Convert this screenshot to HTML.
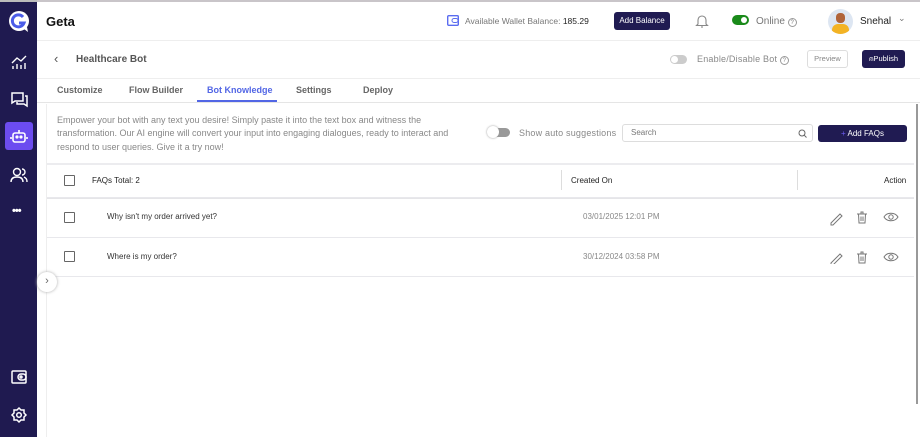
<!DOCTYPE html>
<html><head><meta charset="utf-8"><style>
*{box-sizing:border-box;margin:0;padding:0}
body{width:920px;height:437px;overflow:hidden;background:#fff;font-family:"Liberation Sans",sans-serif;position:relative;color:#333}
.abs{position:absolute}
.sb{left:0;top:0;width:37px;height:437px;background:#1f1a50;border-top:2px solid #bbb}
.ic{position:absolute;left:9px;width:20px;height:20px}
.top{left:37px;top:0;right:0;height:41px;border-top:2px solid #c9c5c9;border-bottom:1px solid #eee}
.t{position:absolute;white-space:nowrap}
.btn{position:absolute;background:#201b52;color:#fff;font-size:8px;border-radius:3px;text-align:center}
.row{position:absolute;left:47px;right:6px;border-bottom:1px solid #e8e8ec}
.cb{position:absolute;left:64px;width:11px;height:11px;border:1.3px solid #666;border-radius:1px}
</style></head><body>
<div class="abs sb">
 <svg class="ic" style="top:7px;left:7px;width:24px;height:24px" viewBox="0 0 24 24"><circle cx="12" cy="12" r="10" fill="#fff"/><path d="M16 8a6 6 0 1 0 1 6h-5" stroke="#4b5ce8" stroke-width="3" fill="none"/><path d="M17 20l4 3-1-5z" fill="#fff"/></svg>
 <svg class="ic" style="top:50px" viewBox="0 0 20 20" stroke="#fff" fill="none" stroke-width="1.4"><path d="M3 11l5-5 4 3 5-5"/><path d="M4 17v-3M8 17v-5M12 17v-4M16 17v-6"/></svg>
 <svg class="ic" style="top:87px" viewBox="0 0 20 20" stroke="#fff" fill="none" stroke-width="1.5"><path d="M3 4h11v8H6l-3 2z"/><path d="M16 7h2v10l-3-2H8v-2"/></svg>
 <div style="position:absolute;left:5px;top:120px;width:28px;height:28px;background:#6c4cf0;border-radius:3px"></div>
 <svg class="ic" style="top:124px" viewBox="0 0 20 20" stroke="#fff" fill="none" stroke-width="1.6"><rect x="4" y="7" width="12" height="9" rx="2"/><path d="M10 4v3M2 11v2M18 11v2"/><circle cx="8" cy="11" r=".8" fill="#fff"/><circle cx="12" cy="11" r=".8" fill="#fff"/></svg>
 <svg class="ic" style="top:163px" viewBox="0 0 20 20" stroke="#fff" fill="none" stroke-width="1.4"><circle cx="8" cy="7" r="3.5"/><path d="M2 17c0-4 3-5 6-5s6 1 6 5M13 4a3 3 0 0 1 0 6M15 12c2 1 3 2 3 5"/></svg>
 <div class="t" style="left:12px;top:203px;color:#fff;font-size:11px;font-weight:bold;letter-spacing:-1px">•••</div>
 <svg class="ic" style="top:365px" viewBox="0 0 20 20" stroke="#fff" fill="none" stroke-width="1.5"><rect x="3" y="4" width="14" height="12" rx="1"/><rect x="9" y="7" width="8" height="6" rx="3"/><circle cx="12" cy="10" r="1"/></svg>
 <svg class="ic" style="top:403px" viewBox="0 0 20 20" stroke="#fff" fill="none" stroke-width="1.5"><path d="M10 3l2 2h3v3l2 2-2 2v3h-3l-2 2-2-2H5v-3l-2-2 2-2V5h3z"/><circle cx="10" cy="10" r="2.3"/></svg>
</div>
<div class="abs top">
 <div class="t" style="left:9px;top:12px;font-size:13px;font-weight:bold;color:#111">Geta</div>
 <svg class="abs" style="left:410px;top:13px" width="12" height="11" viewBox="0 0 12 11"><rect x=".7" y=".7" width="10.6" height="9.6" rx="1" fill="none" stroke="#5a6cf0" stroke-width="1.4"/><rect x="5" y="3.5" width="6" height="4" rx="2" fill="none" stroke="#5a6cf0"/></svg>
 <div class="t" style="left:428px;top:14px;font-size:8.5px;color:#777">Available Wallet Balance: <span style="color:#222">185.29</span></div>
 <div class="btn" style="left:577px;top:10px;width:56px;height:18px;line-height:18px">Add Balance</div>
 <svg class="abs" style="left:658px;top:11px" width="14" height="16" viewBox="0 0 14 16" fill="none" stroke="#888" stroke-width="1.1"><path d="M3 11V7a4 4 0 0 1 8 0v4l1.5 1.5h-11z"/><path d="M6 14h2"/></svg>
 <div class="abs" style="left:695px;top:13px;width:17px;height:10px;border-radius:5px;background:#1a8a1a"><div style="position:absolute;right:2px;top:2px;width:6px;height:6px;border-radius:3px;background:#fff"></div></div>
 <div class="t" style="left:719px;top:14px;font-size:10px;color:#777">Online <span style="border:1px solid #999;border-radius:50%;display:inline-block;width:9px;height:9px;line-height:8px;text-align:center;font-size:6px">?</span></div>
 <div class="abs" style="left:791px;top:7px;width:25px;height:25px;border-radius:50%;background:#dde6f2;overflow:hidden"><div style="position:absolute;left:8px;top:4px;width:9px;height:10px;border-radius:4px;background:#b0643a"></div><div style="position:absolute;left:4px;top:15px;width:17px;height:12px;border-radius:6px 6px 0 0;background:#f3b324"></div></div>
 <div class="t" style="left:823px;top:14px;font-size:10px;color:#222">Snehal</div>
 <div class="t" style="left:861px;top:11px;font-size:9px;color:#777">⌄</div>
</div>
<div class="abs" style="left:37px;top:41px;right:0;height:38px;border-bottom:1px solid #eee">
 <div class="t" style="left:17px;top:10px;font-size:13px;color:#555">‹</div>
 <div class="t" style="left:39px;top:13px;font-size:10px;font-weight:bold;color:#555">Healthcare Bot</div>
 <div class="abs" style="left:633px;top:14px;width:17px;height:9px;border-radius:5px;background:#ccc"><div style="position:absolute;left:1px;top:1px;width:7px;height:7px;border-radius:4px;background:#fff"></div></div>
 <div class="t" style="left:660px;top:13px;font-size:9px;color:#888;letter-spacing:.2px">Enable/Disable Bot <span style="border:1px solid #999;border-radius:50%;display:inline-block;width:9px;height:9px;line-height:8px;text-align:center;font-size:6px">?</span></div>
 <div class="abs" style="left:770px;top:9px;width:41px;height:18px;border:1px solid #ddd;border-radius:3px;font-size:7.5px;color:#888;text-align:center;line-height:16px">Preview</div>
 <div class="btn" style="left:825px;top:9px;width:43px;height:18px;line-height:18px;font-size:7.5px">⍝Publish</div>
</div>
<div class="abs" style="left:37px;top:79px;right:0;height:24px;border-bottom:1px solid #e5e5e5;font-size:9px;font-weight:bold;color:#666">
 <div class="t" style="left:20px;top:6px">Customize</div>
 <div class="t" style="left:92px;top:6px">Flow Builder</div>
 <div class="t" style="left:170px;top:6px;color:#5266e5">Bot Knowledge</div>
 <div class="abs" style="left:160px;top:21px;width:80px;height:2px;background:#5266e5"></div>
 <div class="t" style="left:259px;top:6px">Settings</div>
 <div class="t" style="left:326px;top:6px">Deploy</div>
</div>
<div class="abs" style="left:46px;top:104px;width:1px;height:333px;background:#eee"></div>
<div class="abs" style="left:916px;top:104px;width:2px;height:300px;background:#999"></div>
<div class="t" style="left:57px;top:114px;font-size:9px;color:#888;line-height:13.3px;white-space:normal;width:395px">Empower your bot with any text you desire! Simply paste it into the text box and witness the transformation. Our AI engine will convert your input into engaging dialogues, ready to interact and respond to user queries. Give it a try now!</div>
<div class="abs" style="left:489px;top:128px;width:21px;height:9px;border-radius:5px;background:#999"></div>
<div class="abs" style="left:487px;top:126px;width:12px;height:12px;border-radius:6px;background:#fff;box-shadow:0 0 2px #999"></div>
<div class="t" style="left:519px;top:128px;font-size:9px;color:#888;letter-spacing:.2px">Show auto suggestions</div>
<div class="abs" style="left:622px;top:124px;width:191px;height:18px;border:1px solid #ddd;border-radius:3px"><div class="t" style="left:8px;top:3px;font-size:8px;color:#777">Search</div><svg class="abs" style="left:175px;top:4px" width="9" height="9" viewBox="0 0 9 9" fill="none" stroke="#666"><circle cx="4" cy="4" r="3"/><path d="M6.2 6.2L8.5 8.5"/></svg></div>
<div class="btn" style="left:818px;top:125px;width:89px;height:17px;line-height:17px"><span style="color:#6c5cf0">+</span> Add FAQs</div>
<div class="row" style="top:163px;height:35px;border-top:2px solid #ececef"></div>
<div class="cb" style="top:175px"></div>
<div class="t" style="left:92px;top:176px;font-size:8px;color:#222">FAQs Total: 2</div>
<div class="abs" style="left:561px;top:170px;width:1px;height:20px;background:#ddd"></div>
<div class="t" style="left:571px;top:176px;font-size:8px;color:#222">Created On</div>
<div class="abs" style="left:797px;top:170px;width:1px;height:20px;background:#ddd"></div>
<div class="t" style="left:884px;top:176px;font-size:8px;color:#222">Action</div>
<div class="row" style="top:198px;height:40px;border-top:1px solid #e5e5e8"></div>
<div class="cb" style="top:212px"></div>
<div class="t" style="left:107px;top:212px;font-size:8px;color:#333">Why isn't my order arrived yet?</div>
<div class="t" style="left:583px;top:212px;font-size:8px;color:#888">03/01/2025 12:01 PM</div>
<div class="row" style="top:238px;height:39px"></div>
<div class="cb" style="top:251px"></div>
<div class="t" style="left:107px;top:252px;font-size:8px;color:#333">Where is my order?</div>
<div class="t" style="left:583px;top:252px;font-size:8px;color:#888">30/12/2024 03:58 PM</div>
<svg class="abs" style="left:829px;top:210px" width="72" height="54" viewBox="0 0 72 54" fill="none" stroke="#777" stroke-width="1">
 <g><path d="M2 13l9-9 2 2-9 9H2z"/><path d="M28 4h10M32 4V2h2v2M29.5 4l.5 9h6l.5-9M32 6.5v4.5M34 6.5v4.5"/><path d="M55 7c3-5 11-5 14 0-3 5-11 5-14 0z"/><circle cx="62" cy="7" r="2.2"/></g>
 <g transform="translate(0,40)"><path d="M2 13l9-9 2 2-9 9H2z"/><path d="M28 4h10M32 4V2h2v2M29.5 4l.5 9h6l.5-9M32 6.5v4.5M34 6.5v4.5"/><path d="M55 7c3-5 11-5 14 0-3 5-11 5-14 0z"/><circle cx="62" cy="7" r="2.2"/></g>
</svg>
<div class="abs" style="left:37px;top:272px;width:20px;height:20px;border-radius:50%;background:#fff;box-shadow:0 0 3px #aaa;font-size:11px;color:#666;text-align:center;line-height:18px">›</div>
</body></html>
